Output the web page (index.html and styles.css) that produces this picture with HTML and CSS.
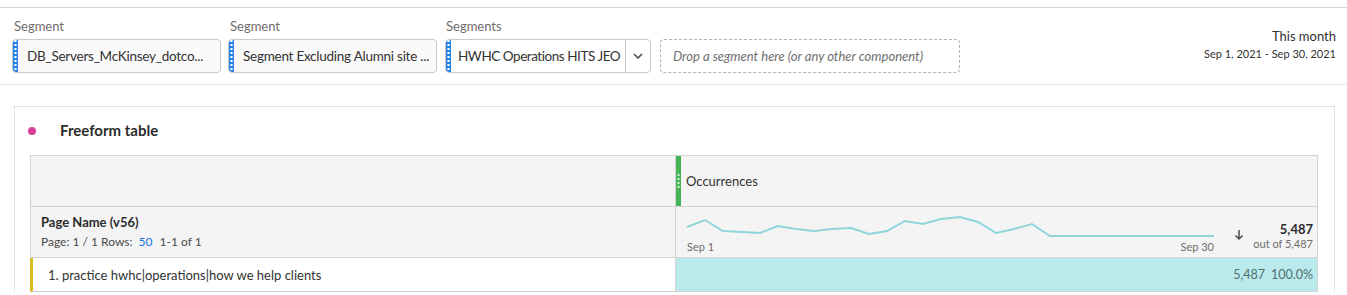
FILE: index.html
```html
<!DOCTYPE html>
<html lang="en">
<head>
    <meta charset="UTF-8">
    <meta name="viewport" content="width=device-width, initial-scale=1.0">
    <title>Freeform table</title>
    <link rel="stylesheet" href="styles.css">
</head>
<body>
    <div class="toolbar">
        <div class="drop-zones">
            <div class="field">
                <div class="field-label">Segment</div>
                <div class="chip chip-wide">
                    <span class="grip"></span>
                    <span class="chip-text">DB_Servers_McKinsey_dotco...</span>
                </div>
            </div>
            <div class="field">
                <div class="field-label">Segment</div>
                <div class="chip chip-wide">
                    <span class="grip"></span>
                    <span class="chip-text">Segment Excluding Alumni site ...</span>
                </div>
            </div>
            <div class="field">
                <div class="field-label">Segments</div>
                <div class="field-row">
                    <div class="chip chip-select">
                        <span class="grip"></span>
                        <span class="chip-text">HWHC Operations HITS JEO</span>
                        <span class="chip-arrow">
                            <svg width="10" height="6" viewBox="0 0 10 6"><path d="M1 1l4 4 4-4" fill="none" stroke="#4b4b4b" stroke-width="1.6"/></svg>
                        </span>
                    </div>
                    <div class="drop-target">Drop a segment here (or any other component)</div>
                </div>
            </div>
        </div>
        <div class="date-range">
            <div class="date-title">This month</div>
            <div class="date-span">Sep 1, 2021 - Sep 30, 2021</div>
        </div>
    </div>

    <div class="panel">
        <div class="panel-head">
            <span class="panel-dot"></span>
            <h2>Freeform table</h2>
        </div>

        <div class="table">
            <div class="cell head-left"></div>
            <div class="cell head-right">
                <span class="metric-grip"></span>
                <span>Occurrences</span>
            </div>

            <div class="cell dim-cell">
                <div class="dim-name">Page Name (v56)</div>
                <div class="pager">Page: 1 / 1 Rows: <span class="rows-link">50</span> 1-1 of 1</div>
            </div>
            <div class="cell summary-cell">
                <div class="trend">
                    <svg class="spark" width="527" height="26" viewBox="0 0 527 26">
                        <polyline fill="none" stroke="#8fd5db" stroke-width="2" points="0,15 18,8 36,19 55,20 73,21 91,14 109,17 127,19 145,17 164,16 182,22 200,19 218,9 236,12 254,7 273,5 291,10 309,21 327,17 345,12 363,24 382,24 400,24 418,24 436,24 454,24 472,24 491,24 509,24 527,24"/>
                    </svg>
                    <div class="trend-axis">
                        <span>Sep 1</span>
                        <span>Sep 30</span>
                    </div>
                </div>
                <span class="sort-arrow">
                    <svg width="10" height="12" viewBox="0 0 10 12"><path d="M5 1v9M1.5 6.5L5 10l3.5-3.5" fill="none" stroke="#4b4b4b" stroke-width="1.5"/></svg>
                </span>
                <div class="total">
                    <div class="total-value">5,487</div>
                    <div class="total-of">out of 5,487</div>
                </div>
            </div>

            <div class="cell row-label">1. practice hwhc|operations|how we help clients</div>
            <div class="cell row-value">
                <span>5,487</span>
                <span class="pct">100.0%</span>
            </div>
        </div>
    </div>
</body>
</html>
```

FILE: styles.css
```css
body {
    margin: 0;
    font-family: Lato, "Open Sans", sans-serif;
    color: #4b4b4b;
    background-color: white;
}

.toolbar {
    margin-top: 7px;
    border-top: 1px solid #d5d5d5;
    border-bottom: 1px solid #e8e8e8;
    padding: 9px 11px 11px 12px;
    display: flex;
    justify-content: space-between;
}

.drop-zones {
    display: flex;
    gap: 7px;
}

.field-label {
    font-size: 13px;
    line-height: 18px;
    color: #6e6e6e;
    padding-left: 2px;
    margin-bottom: 4px;
}

.field-row {
    display: flex;
    gap: 9px;
}

.chip {
    height: 32px;
    border: 1px solid #cacaca;
    border-radius: 4px;
    background-color: #fafafa;
    display: flex;
    align-items: center;
    overflow: hidden;
    box-sizing: content-box;
}

.chip-wide {
    width: 207px;
}

.chip-select {
    width: 204px;
    background-color: white;
    margin-left: 1px;
}

.grip {
    align-self: stretch;
    width: 5px;
    flex-shrink: 0;
    background-color: #2680eb;
    background-image: radial-gradient(circle, white 1px, transparent 1.3px);
    background-size: 5px 4px;
    background-position: 0 3px;
    border-radius: 3px 0 0 3px;
}

.chip-text {
    flex: 1;
    font-size: 13.5px;
    letter-spacing: -0.25px;
    color: #323232;
    padding: 0 6px 0 9px;
    white-space: nowrap;
    overflow: hidden;
    text-overflow: ellipsis;
}

.chip-select .chip-text {
    padding: 0 0 0 7px;
    letter-spacing: -0.45px;
}

.chip-arrow {
    align-self: stretch;
    width: 24px;
    border-left: 1px solid #cacaca;
    display: flex;
    align-items: center;
    justify-content: center;
    flex-shrink: 0;
}

.drop-target {
    width: 286px;
    height: 32px;
    border: 1px dashed #b3b3b3;
    border-radius: 4px;
    font-size: 13px;
    font-style: italic;
    color: #6e6e6e;
    display: flex;
    align-items: center;
    padding-left: 12px;
    box-sizing: content-box;
}

.date-range {
    text-align: right;
    padding-top: 9px;
}

.date-title {
    font-size: 13px;
    line-height: 20px;
    color: #323232;
}

.date-span {
    font-size: 11px;
    line-height: 16px;
    color: #323232;
}

.panel {
    margin: 21px 12px 0 14px;
    border: 1px solid #e1e1e1;
    border-bottom: none;
    padding: 0 16px 0 15px;
}

.panel-head {
    display: flex;
    align-items: center;
    height: 48px;
}

.panel-dot {
    width: 8px;
    height: 8px;
    border-radius: 50%;
    background-color: #d83f96;
    margin-left: -2px;
    margin-right: 24px;
}

.panel-head h2 {
    margin: 0 0 3px;
    font-size: 15px;
    font-weight: bold;
    color: #2c2c2c;
}

.table {
    display: grid;
    grid-template-columns: 644px 1fr;
    border: 1px solid #d3d3d3;
    border-bottom: none;
}

.cell {
    border-bottom: 1px solid #d3d3d3;
    box-sizing: border-box;
}

.head-left,
.head-right,
.dim-cell,
.summary-cell {
    background-color: #f4f4f4;
}

.head-left {
    height: 51px;
}

.head-right {
    display: flex;
    align-items: center;
    font-size: 13px;
    color: #323232;
    border-left: 1px solid #d3d3d3;
}

.metric-grip {
    align-self: stretch;
    width: 5px;
    margin-right: 5px;
    background-color: #44b556;
    display: flex;
    align-items: center;
}

.metric-grip::before {
    content: "";
    width: 5px;
    height: 16px;
    background-image: radial-gradient(circle, #d8f0dc 0.9px, transparent 1.3px);
    background-size: 5px 4px;
}

.dim-cell {
    height: 51px;
    padding: 7px 10px 0 10px;
}

.dim-name {
    font-size: 13px;
    font-weight: bold;
    color: #2c2c2c;
    line-height: 17px;
}

.pager {
    font-size: 12px;
    color: #4b4b4b;
    line-height: 18px;
    margin-top: 2px;
}

.rows-link {
    color: #1473e6;
    margin: 0 4px 0 3px;
}

.summary-cell {
    border-left: 1px solid #d3d3d3;
    display: flex;
    align-items: flex-start;
    padding: 5px 4px 0 11px;
}

.trend {
    width: 527px;
}

.spark {
    display: block;
}

.trend-axis {
    display: flex;
    justify-content: space-between;
    font-size: 11px;
    color: #6e6e6e;
    line-height: 14px;
    margin-top: 2px;
}

.sort-arrow {
    margin: 13px 0 0 20px;
}

.total {
    margin-left: auto;
    text-align: right;
    padding-top: 9px;
}

.total-value {
    font-size: 13px;
    font-weight: bold;
    color: #2c2c2c;
    line-height: 16px;
}

.total-of {
    font-size: 11px;
    color: #6e6e6e;
    line-height: 14px;
}

.row-label {
    height: 34px;
    display: flex;
    align-items: center;
    font-size: 13px;
    color: #323232;
    padding-left: 15px;
    border-left: 3px solid #d9bd1c;
    margin-left: -1px;
}

.row-value {
    background-color: #bbeaec;
    border-left: 1px solid #d3d3d3;
    display: flex;
    align-items: center;
    justify-content: flex-end;
    gap: 6px;
    font-size: 12.5px;
    color: #4f6f70;
    padding-right: 4px;
}
```
